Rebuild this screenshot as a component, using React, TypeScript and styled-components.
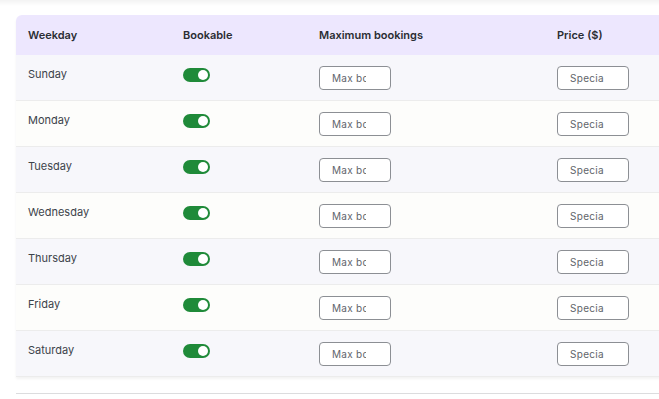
import React from "react";
import styled, { createGlobalStyle } from "styled-components";

const Global = createGlobalStyle`
  html, body { margin: 0; padding: 0; background: #ffffff; overflow: hidden; }
  body { font-family: Inter, "Noto Sans", Arial, sans-serif; }
  * { box-sizing: border-box; }
`;

const Page = styled.div`
  width: 659px;
  height: 399px;
  overflow: hidden;
  position: relative;
  background: linear-gradient(#f3f3f3 0px, #ffffff 6px);
  padding: 15px 0 0 16px;
`;

const Card = styled.div`
  width: 720px;
  border-radius: 6px 6px 0 0;
  overflow: hidden;
  box-shadow: 0 2px 3px rgba(0, 0, 0, 0.05);
`;

const HeaderRow = styled.div`
  display: grid;
  grid-template-columns: 155px 136px 238px 1fr;
  height: 40px;
  align-items: center;
  background: #ede7fe;
`;

const HeadCell = styled.div`
  padding: 0 12px 1px;
  font-size: 11px;
  font-weight: 600;
  color: #2a2d33;
`;

const Row = styled.div<{ $alt: boolean }>`
  display: grid;
  grid-template-columns: 155px 136px 238px 1fr;
  height: 46px;
  align-items: start;
  padding-top: 11px;
  background: ${(p) => (p.$alt ? "#fdfdfb" : "#f7f7fb")};
  border-bottom: 1px solid #ececec;
`;

const DayCell = styled.div`
  padding: 1px 12px 0;
  font-size: 11px;
  line-height: 14px;
  color: #3c434a;
`;

const Cell = styled.div<{ $pl: number }>`
  padding-left: ${(p) => p.$pl}px;
  display: flex;
  align-items: flex-start;
`;

const Toggle = styled.div`
  position: relative;
  width: 27px;
  height: 14px;
  margin-top: 2px;
  border-radius: 7px;
  background: #1f8a39;
`;

const Knob = styled.span`
  position: absolute;
  right: 2px;
  top: 2px;
  width: 10px;
  height: 10px;
  border-radius: 50%;
  background: #ffffff;
`;

const Input = styled.input`
  width: 72px;
  height: 24px;
  border: 1px solid #8c8f94;
  border-radius: 4px;
  padding: 0 24px 0 12px;
  font-family: Inter, "Noto Sans", Arial, sans-serif;
  font-size: 10px;
  letter-spacing: 0.3px;
  color: #2c3338;
  background: #ffffff;
  outline: none;
  &::placeholder { color: #5f656b; opacity: 1; }
`;

const Divider = styled.div`
  margin-top: 16px;
  height: 1px;
  width: 720px;
  background: #dcdcde;
`;

const days = ["Sunday", "Monday", "Tuesday", "Wednesday", "Thursday", "Friday", "Saturday"];

export default function App() {
  return (
    <Page>
      <Global />
      <Card>
        <HeaderRow>
          <HeadCell>Weekday</HeadCell>
          <HeadCell>Bookable</HeadCell>
          <HeadCell>Maximum bookings</HeadCell>
          <HeadCell>Price ($)</HeadCell>
        </HeaderRow>
        {days.map((d, i) => (
          <Row key={d} $alt={i % 2 === 1}>
            <DayCell>{d}</DayCell>
            <Cell $pl={12}>
              <Toggle>
                <Knob />
              </Toggle>
            </Cell>
            <Cell $pl={12}>
              <Input placeholder="Max bookings" />
            </Cell>
            <Cell $pl={12}>
              <Input placeholder="Special price" />
            </Cell>
          </Row>
        ))}
      </Card>
      <Divider />
    </Page>
  );
}
